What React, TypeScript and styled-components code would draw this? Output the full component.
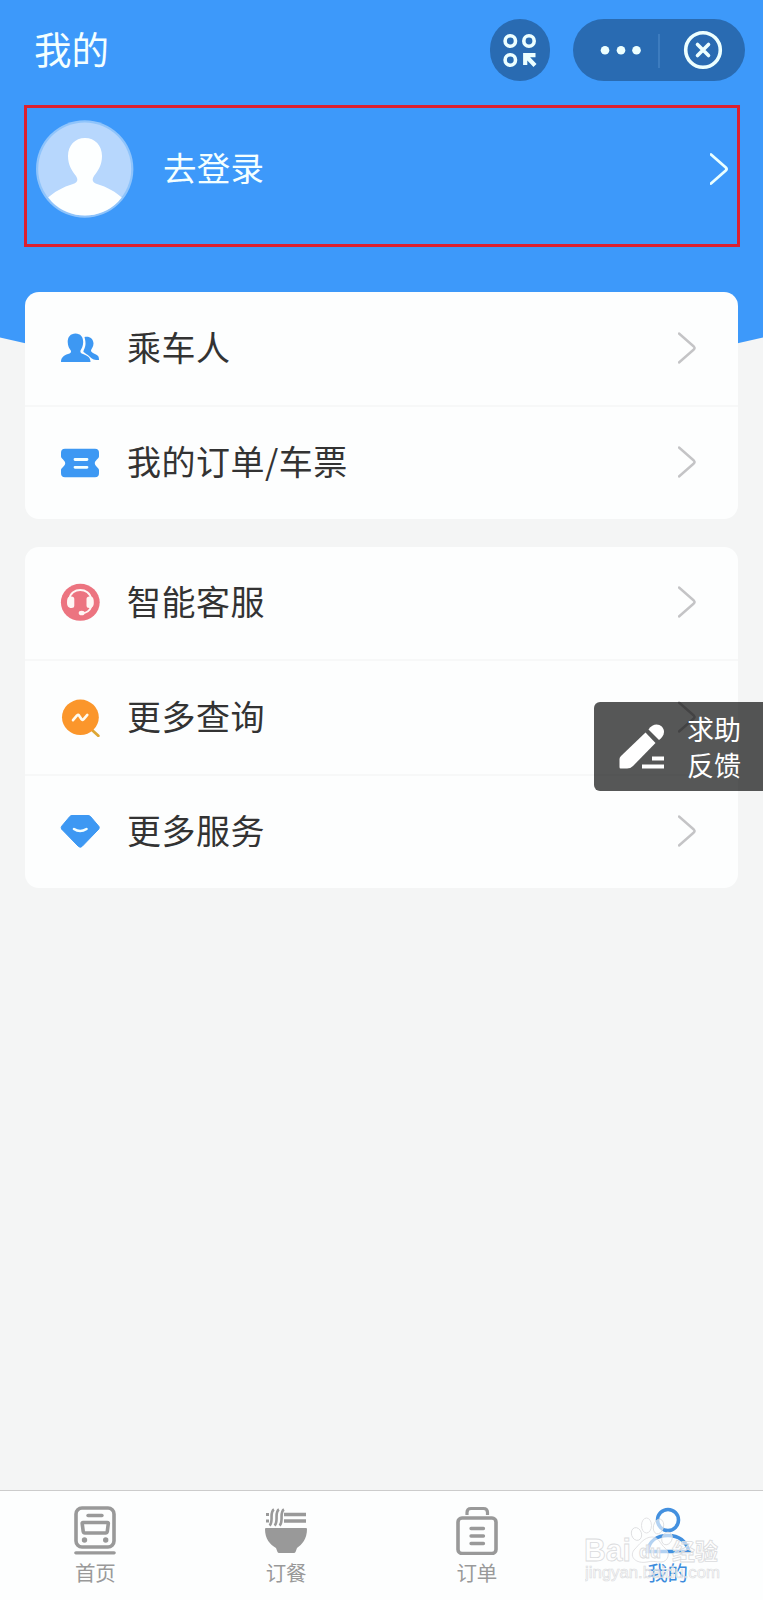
import React from 'react';
import styled, { createGlobalStyle } from 'styled-components';

const GlobalStyle = createGlobalStyle`
  * { box-sizing: border-box; }
  body {
    margin: 0;
    background: #f4f5f5;
    font-family: "Noto Sans CJK SC", "Noto Sans", sans-serif;
    color: #333;
  }
`;

const Page = styled.div`
  position: relative;
  display: flex;
  flex-direction: column;
  width: 763px;
  height: 1600px;
  overflow: hidden;
  background: #f4f5f5;
`;

const HeaderCurve = styled.svg`
  position: absolute;
  top: 0;
  left: 0;
  display: block;
`;

const TopBar = styled.header`
  position: relative;
  display: flex;
  align-items: center;
  height: 62px;
  margin: 19px 18px 0 34px;
`;

const Title = styled.h1`
  flex: 1;
  margin: 0;
  padding-bottom: 4px;
  font-size: 37.5px;
  font-weight: 400;
  line-height: 58px;
  color: #f4ffff;
`;

const RoundButton = styled.div`
  width: 60px;
  height: 62px;
  border-radius: 31px;
  background: #296bb2;
  margin-right: 23px;
`;

const Capsule = styled.div`
  width: 172px;
  height: 62px;
  border-radius: 31px;
  background: #296bb2;
`;

const LoginRow = styled.section`
  position: relative;
  display: flex;
  align-items: center;
  width: 716px;
  height: 142px;
  margin: 24px 0 0 24px;
  padding: 0 8px 15px 9px;
  border: 3px solid #dc202f;
`;

const LoginText = styled.span`
  flex: 1;
  margin-left: 29px;
  padding-bottom: 4px;
  font-size: 33.5px;
  letter-spacing: 0.3px;
  line-height: 50px;
  color: #f4ffff;
`;

const Card = styled.section<{ $top: number }>`
  position: relative;
  width: 713px;
  margin: ${(p) => p.$top}px 0 0 25px;
  border-radius: 14px;
  background: #fdfefe;
`;

const MenuRow = styled.div<{ $height: number }>`
  display: flex;
  align-items: center;
  height: ${(p) => p.$height}px;
  padding: 0 41px 2px 35px;

  & + & {
    border-top: 2px solid #f7f8f8;
  }
`;

const MenuLabel = styled.span`
  flex: 1;
  margin-left: 27px;
  padding-bottom: 2px;
  font-size: 34px;
  letter-spacing: 0.5px;
  line-height: 50px;
  color: #333;
`;

const Feedback = styled.aside`
  position: absolute;
  top: 702px;
  right: 0;
  display: flex;
  align-items: center;
  width: 169px;
  height: 89px;
  padding: 0 0 2px 25px;
  border-radius: 6px 0 0 6px;
  background: rgba(0, 0, 0, 0.66);
`;

const FeedbackText = styled.div`
  width: 56px;
  margin-left: 23px;
  padding-top: 2px;
  font-size: 27px;
  line-height: 36px;
  color: #fff;
`;

const TabBar = styled.nav`
  display: flex;
  height: 110px;
  margin-top: auto;
  border-top: 1px solid #ccc;
  background: #fdfefe;
`;

const Tab = styled.div<{ $active?: boolean }>`
  flex: 1;
  display: flex;
  flex-direction: column;
  align-items: center;
  padding-top: 14px;
  color: ${(p) => (p.$active ? '#3b8bdc' : '#999')};
`;

const TabLabel = styled.span`
  margin-top: 2px;
  font-size: 20.5px;
  line-height: 30px;
`;

const Watermark = styled.div`
  position: absolute;
  left: 585px;
  bottom: 18px;
  width: 136px;
  height: 68px;
`;

const Chevron = ({ color, width }: { color: string; width: number }) => (
  <svg width="19" height="34" viewBox="0 0 19 34" fill="none" stroke={color} strokeWidth={width} strokeLinecap="round" strokeLinejoin="round">
    <path d="M1 2.500 L15.800 15.500 Q17.300 17 15.800 18.500 L1 31.500" />
  </svg>
);

const GridArrowIcon = () => (
  <svg width="60" height="62" viewBox="0 0 60 62" fill="none" stroke="#ecffff" strokeWidth="3.6">
    <circle cx="20.3" cy="22" r="5.2" />
    <circle cx="39" cy="22" r="5.2" />
    <circle cx="20.3" cy="41" r="5.2" />
    <path d="M35.200 46 V36.200 H45.500 M36 37 L45 46.500" strokeWidth="4.200" />
  </svg>
);

const CapsuleIcon = () => (
  <svg width="172" height="62" viewBox="0 0 172 62" fill="none">
    <g fill="#ecffff">
      <circle cx="32" cy="31.2" r="4.3" />
      <circle cx="48" cy="31.2" r="4.3" />
      <circle cx="63.5" cy="31.2" r="4.3" />
    </g>
    <path d="M86 15 V49" stroke="#4b88c8" strokeWidth="1.2" />
    <g stroke="#ecffff" strokeWidth="3.6">
      <circle cx="130" cy="31" r="17.3" />
      <path d="M124.500 25.500 L135.500 36.500 M135.500 25.500 L124.500 36.500" strokeLinecap="round" />
    </g>
  </svg>
);

const Avatar = () => (
  <svg width="98" height="98" viewBox="0 0 98 98">
    <defs>
      <clipPath id="avatarClip"><circle cx="49" cy="49" r="46.500" /></clipPath>
    </defs>
    <circle cx="48.700" cy="49" r="48.700" fill="#8fc4fb" />
    <circle cx="48.700" cy="49" r="46.500" fill="#b7d7fd" />
    <g clipPath="url(#avatarClip)" fill="#fdffff">
      <path d="M49 18 C59 18 66 25.500 66 36 C66 45 62 51 58 56 C55.500 60 56.500 62.500 61 64 C71 67 80 72 87 78.500 L87 98 H11 V78.500 C18 72 27 67 37 64 C41.500 62.500 42.500 60 40 56 C36 51 32 45 32 36 C32 25.500 39 18 49 18Z" />
    </g>
  </svg>
);

const PassengerIcon = () => (
  <svg width="40" height="40" viewBox="0 0 40 40" fill="#3d98f3">
    <path d="M24.500 9 C29 7.700 33.500 10.500 33.500 15.500 C33.500 19 31.500 20.500 31 22.200 C30.700 24 33 25 36 26.500 C38.500 27.700 39 29 39 32 C35 32 32 31.500 29.500 28.500 C27.500 26.500 24.500 25 23.500 24 C23 22.500 25.500 20 25.500 15.500 C25.500 12.500 24.800 10.500 24.500 9Z" />
    <path d="M15.500 5.500 C20.500 5.500 23.200 9 23.200 14 C23.200 18 21.500 21 20.500 22.500 C20 24.500 21 25.200 23 26 C28 28 30.500 29.500 30.500 34 H1 C1 29.500 3.500 27.500 8 26 C10.500 25.200 11.500 24.500 10.800 22.500 C9.500 21 7.700 18 7.700 14 C7.700 9 10.500 5.500 15.500 5.500Z" />
  </svg>
);

const TicketIcon = () => (
  <svg width="40" height="40" viewBox="0 0 40 40">
    <path d="M5 6.800 H35 Q39 6.800 39 10.800 V14.300 C39 16.800 34.800 18.300 34.800 21.300 C34.800 24.300 39 25.800 39 28.300 V31.300 Q39 35.300 35 35.300 H5 Q1 35.300 1 31.300 V28.300 C1 25.800 5.200 24.300 5.200 21.300 C5.200 18.300 1 16.800 1 14.300 V10.800 Q1 6.800 5 6.800Z" fill="#3d98f3" />
    <path d="M15 17.500 H27 M15 25.300 H27" stroke="#f4ffff" strokeWidth="2.800" strokeLinecap="round" />
  </svg>
);

const ServiceIcon = () => (
  <svg width="40" height="40" viewBox="0 0 40 40" fill="none">
    <ellipse cx="20.300" cy="20.300" rx="19.400" ry="18.500" fill="#ec7480" />
    <path d="M9.500 17 C10.500 5 30 5 31 17" stroke="#fff6f4" strokeWidth="2" />
    <path d="M9.500 14.500 H11.500 Q14.300 14.500 14.300 17 V23.500 Q14.300 26 11.500 26 C8 26 7 23.500 7 20.500 C7 17.500 7.500 15 9.500 14.500Z M31.300 14.500 H29.300 Q26.500 14.500 26.500 17 V23.500 Q26.500 26 29.300 26 C33 26 33.800 23.500 33.800 20.500 C33.800 17.500 33.300 15 31.300 14.500Z" fill="#fff6f4" />
    <path d="M31.300 24.500 C30 28 27.500 31 22 31.300" stroke="#fff6f4" strokeWidth="2" />
    <ellipse cx="21.700" cy="31" rx="3" ry="2.300" fill="#fff6f4" />
  </svg>
);

const QueryIcon = () => (
  <svg width="40" height="40" viewBox="0 0 40 40" fill="none" strokeLinecap="round" strokeLinejoin="round">
    <path d="M32 33 L38.300 38.800" stroke="#dda735" strokeWidth="2.800" />
    <ellipse cx="20.400" cy="20.300" rx="18.400" ry="17.700" fill="#fb962b" />
    <path d="M13 23.200 L17 18.400 Q18.200 17.400 19 18.400 L21.700 22.400 Q22.700 23.400 23.700 22.200 L27.300 17.900" stroke="#fffbee" strokeWidth="2.600" />
  </svg>
);

const GemIcon = () => (
  <svg width="40" height="40" viewBox="0 0 40 40" fill="none">
    <path d="M12 4.500 H28 Q29.500 4.500 30.500 5.500 L38.800 15.300 Q39.800 16.800 38.700 18.200 L22 35.500 Q20.300 37 18.500 35.500 L1.700 18.200 Q.6 16.800 1.600 15.300 L9.800 5.500 Q10.700 4.500 12 4.500Z" fill="#3d98f3" stroke="#3d98f3" strokeLinejoin="round" />
    <path d="M14 18 Q20 22 26.500 18" stroke="#f4ffff" strokeWidth="2.600" strokeLinecap="round" />
  </svg>
);

const PencilIcon = () => (
  <svg width="45" height="46" viewBox="0 0 45 46" fill="#fff">
    <path d="M26.500 9.500 L36.500 20 L14 43 Q11.500 45.500 8 45.500 H1.500 Q.5 45.500 .5 44 V36 Q.5 34.500 2 33Z" />
    <path d="M29.500 6.500 C35 -2 45 1.500 45 9 C45 12.500 42.500 15 40 17Z" />
    <path d="M33 33.500 H45 V37.500 H33Z M23 41.500 H45 V45.500 H23Z" />
  </svg>
);

const TrainIcon = () => (
  <svg width="42" height="50" viewBox="0 0 42 50" fill="none" stroke="#999" strokeWidth="3">
    <rect x="2" y="3" width="38" height="39" rx="6" strokeWidth="3.600" />
    <path d="M14 10.500 H28" strokeLinecap="round" strokeWidth="3.400" />
    <path d="M9 17.500 H33.500 Q34.500 17.500 34.300 18.500 L33.300 26.500 Q33 28 31.500 28 H11 Q9.500 28 9.200 26.500 L8.200 18.500 Q8 17.500 9 17.500Z" strokeWidth="3.600" />
    <path d="M1.800 47.800 H40.200" strokeLinecap="round" strokeWidth="3.200" />
    <g fill="#999" stroke="none"><circle cx="10.500" cy="35" r="2.700" /><circle cx="31.700" cy="35" r="2.700" /></g>
  </svg>
);

const NoodleIcon = () => (
  <svg width="42" height="50" viewBox="0 0 42 50" fill="none" stroke="#999">
    <path d="M0 24 Q0 23 1 23 H41 Q42 23 42 24 C42 34 37 39.500 32 43 L30.500 47 Q30 48 29 48 H14 Q13 48 12.500 47 L11 43 C5 39.500 0 34 0 24Z" fill="#999" stroke="none" />
    <path d="M19 9.500 H41 M19 16 H41" strokeWidth="3.600" />
    <path d="M1 9.500 H4 M1 16 H4" strokeWidth="3.200" />
    <path d="M9 4.500 C4 7 9 17 4.500 20.500 M14 4.500 C9 7 14 17 9.500 20.500 M19 4.500 C14 7 19 17 14.500 20.500" strokeWidth="2.600" />
  </svg>
);

const OrderIcon = () => (
  <svg width="42" height="50" viewBox="0 0 42 50" fill="none" stroke="#999" strokeWidth="3.600">
    <rect x="2" y="13" width="38" height="35.500" rx="4" />
    <path d="M11 10 V7.500 Q11 3.500 15 3.500 H27.500 Q31.500 3.500 31.500 7.500 V10" strokeWidth="3.200" />
    <path d="M15 23.500 H27.500 M15 31 H27.500 M15 38.500 H27.500" strokeLinecap="round" strokeWidth="3.300" />
  </svg>
);

const MineIcon = () => (
  <svg width="46" height="50" viewBox="0 0 46 50" fill="none" stroke="#4390df" strokeWidth="3.600">
    <circle cx="23" cy="15" r="10.500" />
    <path d="M2.500 46.500 C4 36 12 30.500 23 30.500 C34 30.500 41 36 44 46.500 Z" />
  </svg>
);

const BrandMark = () => (
  <svg width="136" height="68" viewBox="0 0 136 68" fill="#fff" fillOpacity="0.6" stroke="#dadbdd" strokeWidth="0.800" fontFamily="Liberation Sans, Noto Sans CJK SC, sans-serif">
    <text x="-1" y="47" fontSize="31" fontWeight="700" textLength="47" lengthAdjust="spacingAndGlyphs">Bai</text>
    <ellipse cx="51.500" cy="20" rx="5" ry="6.500" transform="rotate(-18 51.500 20)" />
    <ellipse cx="61.500" cy="11.500" rx="5" ry="7.500" />
    <ellipse cx="73.500" cy="12.500" rx="5" ry="7.500" transform="rotate(15 73.500 12.500)" />
    <ellipse cx="82" cy="24.500" rx="5" ry="6.500" transform="rotate(25 82 24.500)" />
    <path d="M67 23 C74 23 75 30 80 34 C86 39 83 48 76 48 C70 48 68 46.500 62 48 C51 50 44 43 49 36 C54 31 59 23 67 23Z" />
    <text x="54" y="44" fontSize="18" fontWeight="700">du</text>
    <text x="87" y="46" fontSize="23" fontWeight="700" textLength="46" fontFamily="Noto Sans CJK SC">经验</text>
    <text x="0" y="63.500" fontSize="16" strokeWidth="0.600" textLength="135" lengthAdjust="spacingAndGlyphs">jingyan.baidu.com</text>
  </svg>
);

const accountItems = [
  { label: '乘车人', icon: <PassengerIcon />, height: 113 },
  { label: '我的订单/车票', icon: <TicketIcon />, height: 114 },
];

const serviceItems = [
  { label: '智能客服', icon: <ServiceIcon />, height: 112 },
  { label: '更多查询', icon: <QueryIcon />, height: 115 },
  { label: '更多服务', icon: <GemIcon />, height: 114 },
];

const tabs = [
  { label: '首页', icon: <TrainIcon /> },
  { label: '订餐', icon: <NoodleIcon /> },
  { label: '订单', icon: <OrderIcon /> },
  { label: '我的', icon: <MineIcon />, active: true },
];

type Item = { label: string; icon: React.ReactNode; height: number };

const Menu = ({ items, top }: { items: Item[]; top: number }) => (
  <Card $top={top}>
    {items.map((item) => (
      <MenuRow key={item.label} $height={item.height}>
        {item.icon}
        <MenuLabel>{item.label}</MenuLabel>
        <Chevron color="#c4c4c6" width={2.4} />
      </MenuRow>
    ))}
  </Card>
);

export default function App() {
  return (
    <Page>
      <GlobalStyle />
      <HeaderCurve width="763" height="390" viewBox="0 0 763 390">
        <path d="M0 0 H763 V337.500 Q381 428 0 337.500Z" fill="#3d99fa" />
      </HeaderCurve>
      <TopBar>
        <Title>我的</Title>
        <RoundButton><GridArrowIcon /></RoundButton>
        <Capsule><CapsuleIcon /></Capsule>
      </TopBar>
      <LoginRow>
        <Avatar />
        <LoginText>去登录</LoginText>
        <Chevron color="#eaffff" width={2.8} />
      </LoginRow>
      <Menu items={accountItems} top={45} />
      <Menu items={serviceItems} top={28} />
      <Feedback>
        <PencilIcon />
        <FeedbackText>求助反馈</FeedbackText>
      </Feedback>
      <TabBar>
        {tabs.map((tab) => (
          <Tab key={tab.label} $active={tab.active}>
            {tab.icon}
            <TabLabel>{tab.label}</TabLabel>
          </Tab>
        ))}
      </TabBar>
      <Watermark><BrandMark /></Watermark>
    </Page>
  );
}
